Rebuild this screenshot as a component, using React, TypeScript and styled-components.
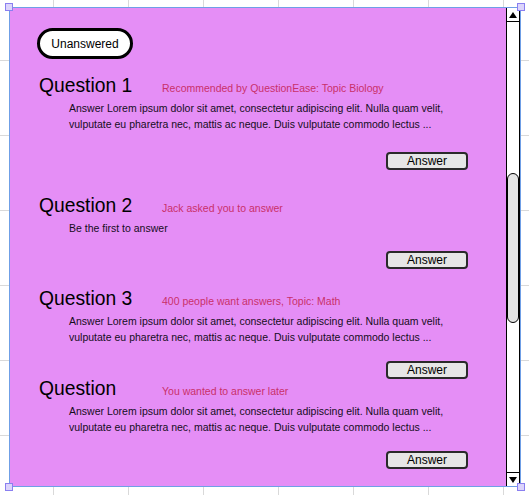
import styled, { createGlobalStyle } from "styled-components";

const GlobalStyle = createGlobalStyle`
  html, body {
    margin: 0;
    padding: 0;
    background: #ffffff;
  }
  body {
    font-family: "Liberation Sans", Arial, sans-serif;
  }
`;

type Question = {
    title: string;
    note: string;
    body: string[];
    top: number;
    buttonGap: number;
};

const questions: Question[] = [
    {
        title: "Question 1",
        note: "Recommended by QuestionEase: Topic Biology",
        body: [
            "Answer Lorem ipsum dolor sit amet, consectetur adipiscing elit. Nulla quam velit,",
            "vulputate eu pharetra nec, mattis ac neque. Duis vulputate commodo lectus ...",
        ],
        top: 15,
        buttonGap: 20,
    },
    {
        title: "Question 2",
        note: "Jack asked you to answer",
        body: ["Be the first to answer"],
        top: 24,
        buttonGap: 15,
    },
    {
        title: "Question 3",
        note: "400 people want answers, Topic: Math",
        body: [
            "Answer Lorem ipsum dolor sit amet, consectetur adipiscing elit. Nulla quam velit,",
            "vulputate eu pharetra nec, mattis ac neque. Duis vulputate commodo lectus ...",
        ],
        top: 18,
        buttonGap: 16,
    },
    {
        title: "Question",
        note: "You wanted to answer later",
        body: [
            "Answer Lorem ipsum dolor sit amet, consectetur adipiscing elit. Nulla quam velit,",
            "vulputate eu pharetra nec, mattis ac neque. Duis vulputate commodo lectus ...",
        ],
        top: -2,
        buttonGap: 16,
    },
];

export default function App() {
    return (
        <>
            <GlobalStyle />
            <Canvas>
                <Panel>
                    <Content>
                        <Tag>Unanswered</Tag>
                        {questions.map((q) => (
                            <QuestionBlock key={q.title} $top={q.top}>
                                <TitleRow>
                                    <Title>{q.title}</Title>
                                    <Note>{q.note}</Note>
                                </TitleRow>
                                <Body>
                                    {q.body.map((line) => (
                                        <div key={line}>{line}</div>
                                    ))}
                                </Body>
                                <ButtonRow $gap={q.buttonGap}>
                                    <AnswerButton>Answer</AnswerButton>
                                </ButtonRow>
                            </QuestionBlock>
                        ))}
                    </Content>
                    <Scrollbar>
                        <ScrollButton $up>
                            <Arrow viewBox="0 0 8 6">
                                <path d="M4 0 L8 6 L0 6 Z" />
                            </Arrow>
                        </ScrollButton>
                        <Track>
                            <Thumb />
                        </Track>
                        <ScrollButton>
                            <Arrow viewBox="0 0 8 6">
                                <path d="M0 0 L8 0 L4 6 Z" />
                            </Arrow>
                        </ScrollButton>
                    </Scrollbar>
                    <Handle $x="left" $y="top" />
                    <Handle $x="right" $y="top" />
                    <Handle $x="left" $y="bottom" />
                    <Handle $x="right" $y="bottom" />
                </Panel>
            </Canvas>
        </>
    );
}

const Canvas = styled.div`
  box-sizing: border-box;
  width: 529px;
  height: 495px;
  padding: 7px 0 0 9px;
  background-color: #ffffff;
  background-image: linear-gradient(to right, #d9d9d9 1px, transparent 1px),
    linear-gradient(to bottom, #d9d9d9 1px, transparent 1px);
  background-size: 75px 75px;
  background-position: 53px 60px;
  overflow: hidden;
`;

const Panel = styled.div`
  position: relative;
  box-sizing: border-box;
  width: 512px;
  height: 480px;
  display: flex;
  background: #e58ef6;
  border: 1px solid #6f9fe6;
`;

const Content = styled.div`
  flex: 1;
  padding: 20px 38px 0 29px;
  overflow: hidden;
`;

const Tag = styled.div`
  box-sizing: border-box;
  display: inline-flex;
  align-items: center;
  justify-content: center;
  width: 96px;
  height: 31px;
  margin-left: -2px;
  border: 3px solid #000;
  border-radius: 16px;
  background: #fff;
  color: #000;
  font-size: 12px;
`;

const QuestionBlock = styled.div<{ $top: number }>`
  margin-top: ${({ $top }) => $top}px;
`;

const TitleRow = styled.div`
  display: flex;
  align-items: baseline;
  height: 24px;
`;

const Title = styled.div`
  width: 123px;
  font-size: 19.3px;
  line-height: 24px;
  color: #000;
`;

const Note = styled.div`
  font-size: 10.5px;
  color: #c9306a;
`;

const Body = styled.div`
  margin: 2px 0 0 30px;
  font-size: 10.5px;
  line-height: 16px;
  color: #150d1c;
  white-space: nowrap;
`;

const ButtonRow = styled.div<{ $gap: number }>`
  display: flex;
  justify-content: flex-end;
  margin-top: ${({ $gap }) => $gap}px;
`;

const AnswerButton = styled.button`
  box-sizing: border-box;
  width: 82px;
  height: 18px;
  padding: 0;
  border: 2px solid #2a2a2a;
  border-radius: 4px;
  background: #e6e6e6;
  font-family: "Liberation Sans", Arial, sans-serif;
  font-size: 12px;
  line-height: 14px;
  color: #000;
`;

const Scrollbar = styled.div`
  box-sizing: border-box;
  width: 14px;
  display: flex;
  flex-direction: column;
  background: #fff;
  border-left: 1px solid #000;
  border-right: 1px solid #000;
`;

const ScrollButton = styled.div<{ $up?: boolean }>`
  height: 13px;
  display: flex;
  align-items: center;
  justify-content: center;
  background: #fff;
  ${({ $up }) => ($up ? "border-bottom: 1px solid #000;" : "border-top: 1px solid #000;")}
`;

const Arrow = styled.svg`
  width: 8px;
  height: 6px;
  fill: #000;
`;

const Track = styled.div`
  flex: 1;
  padding-top: 151px;
`;

const Thumb = styled.div`
  box-sizing: border-box;
  height: 150px;
  background: #e4e4e4;
  border: 1px solid #000;
  border-radius: 6px;
`;

const Handle = styled.div<{ $x: "left" | "right"; $y: "top" | "bottom" }>`
  position: absolute;
  box-sizing: border-box;
  width: 8px;
  height: 8px;
  ${({ $x }) => $x}: -5px;
  ${({ $y }) => $y}: -5px;
  background: #dcd4fb;
  border: 1px solid #8a7ff0;
`;
